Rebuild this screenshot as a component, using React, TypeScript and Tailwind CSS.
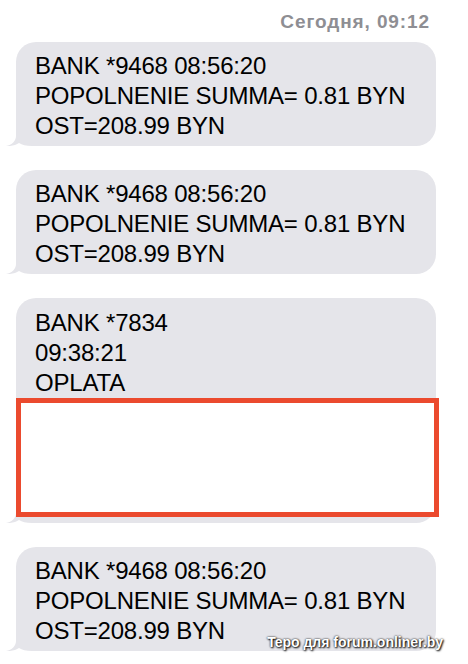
import React from 'react';

const fontStack = '"Liberation Sans", Arial, sans-serif';

// bottom-left tail of an incoming bubble
function Tail() {
  return (
    <svg
      className="absolute left-[-10px] bottom-0"
      width="30"
      height="24"
      viewBox="0 0 30 24"
    >
      <path
        d="M10 0 L10 14 C10 19 6 23 0 24 C5 24.5 10 23 13 21 C16 23 20 24 26 24 L30 24 L30 0 Z"
        fill="#e5e5ea"
      />
    </svg>
  );
}

function Bubble({ lines, children, top = 'pt-[9px]', bottom = 'pb-[5px]' }: { lines: string[]; children?: React.ReactNode; top?: string; bottom?: string }) {
  return (
    <div className={`relative ml-[16px] w-[420px] rounded-[20px] bg-[#e5e5ea] pl-[19px] pr-[12px] ${top} ${bottom}`}>
      <Tail />
      <div className="relative text-[24px] leading-[30px] tracking-[-0.2px] text-black">
        {lines.map((l, i) => (
          <div key={i}>{l}</div>
        ))}
      </div>
      {children}
    </div>
  );
}

const popolnenie = ['BANK *9468 08:56:20', 'POPOLNENIE SUMMA= 0.81 BYN', 'OST=208.99 BYN'];

export default function App() {
  return (
    <div
      className="relative w-[468px] h-[664px] overflow-hidden bg-white pt-[10px]"
      style={{ fontFamily: fontStack }}
    >
      <div className="mb-[8px] pr-[38px] text-right text-[19px] leading-[24px] font-semibold tracking-[0.9px] text-[#8e8e93]">
        Сегодня, 09:12
      </div>

      <div className="flex flex-col gap-[24px]">
        <Bubble lines={popolnenie} />
        <Bubble lines={popolnenie} />
        <Bubble lines={['BANK *7834', '09:38:21', 'OPLATA']} top="pt-[10px]" bottom="pb-[6px]">
          {/* hidden part of the message */}
          <div className="relative -ml-[19px] h-[119px] w-[423px] border-[5px] border-[#eb4a2e] bg-white" />
        </Bubble>
        <Bubble lines={popolnenie} />
      </div>

      {/* watermark */}
      <div
        className="absolute right-[25px] bottom-[14px] text-[14px] leading-[16px] font-bold text-white"
        style={{ textShadow: '0 0 2px #000, 1px 1px 2px #000' }}
      >
        Tepo для forum.onliner.by
      </div>
    </div>
  );
}
